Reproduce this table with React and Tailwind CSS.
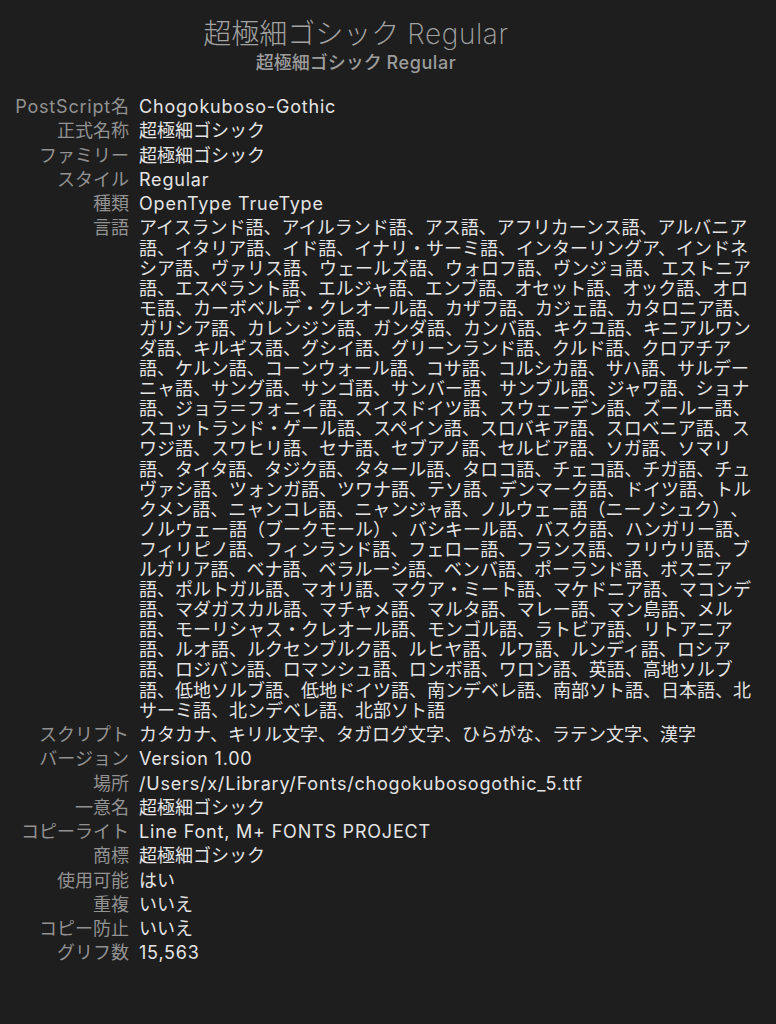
import React from "react";

// Language list, broken where Font Book breaks it
const languageLines = [
  "アイスランド語、アイルランド語、アス語、アフリカーンス語、アルバニア",
  "語、イタリア語、イド語、イナリ・サーミ語、インターリングア、インドネ",
  "シア語、ヴァリス語、ウェールズ語、ウォロフ語、ヴンジョ語、エストニア",
  "語、エスペラント語、エルジャ語、エンブ語、オセット語、オック語、オロ",
  "モ語、カーボベルデ・クレオール語、カザフ語、カジェ語、カタロニア語、",
  "ガリシア語、カレンジン語、ガンダ語、カンバ語、キクユ語、キニアルワン",
  "ダ語、キルギス語、グシイ語、グリーンランド語、クルド語、クロアチア",
  "語、ケルン語、コーンウォール語、コサ語、コルシカ語、サハ語、サルデー",
  "ニャ語、サング語、サンゴ語、サンバー語、サンブル語、ジャワ語、ショナ",
  "語、ジョラ＝フォニィ語、スイスドイツ語、スウェーデン語、ズールー語、",
  "スコットランド・ゲール語、スペイン語、スロバキア語、スロベニア語、ス",
  "ワジ語、スワヒリ語、セナ語、セブアノ語、セルビア語、ソガ語、ソマリ",
  "語、タイタ語、タジク語、タタール語、タロコ語、チェコ語、チガ語、チュ",
  "ヴァシ語、ツォンガ語、ツワナ語、テソ語、デンマーク語、ドイツ語、トル",
  "クメン語、ニャンコレ語、ニャンジャ語、ノルウェー語（ニーノシュク）、",
  "ノルウェー語（ブークモール）、バシキール語、バスク語、ハンガリー語、",
  "フィリピノ語、フィンランド語、フェロー語、フランス語、フリウリ語、ブ",
  "ルガリア語、ベナ語、ベラルーシ語、ベンバ語、ポーランド語、ボスニア",
  "語、ポルトガル語、マオリ語、マクア・ミート語、マケドニア語、マコンデ",
  "語、マダガスカル語、マチャメ語、マルタ語、マレー語、マン島語、メル",
  "語、モーリシャス・クレオール語、モンゴル語、ラトビア語、リトアニア",
  "語、ルオ語、ルクセンブルク語、ルヒヤ語、ルワ語、ルンディ語、ロシア",
  "語、ロジバン語、ロマンシュ語、ロンボ語、ワロン語、英語、高地ソルブ",
  "語、低地ソルブ語、低地ドイツ語、南ンデベレ語、南部ソト語、日本語、北",
  "サーミ語、北ンデベレ語、北部ソト語",
];

const Latin = ({ children }) => <span className="tracking-[0.8px]">{children}</span>;

const rows = [
  { label: <><Latin>PostScript</Latin>名</>, value: <Latin>Chogokuboso-Gothic</Latin> },
  { label: "正式名称", value: "超極細ゴシック" },
  { label: "ファミリー", value: "超極細ゴシック" },
  { label: "スタイル", value: <Latin>Regular</Latin> },
  { label: "種類", value: <Latin>OpenType TrueType</Latin> },
  {
    label: "言語",
    value: languageLines.map((line, i) => (
      <span key={i} className="block whitespace-nowrap">
        {line}
      </span>
    )),
  },
  { label: "スクリプト", value: "カタカナ、キリル文字、タガログ文字、ひらがな、ラテン文字、漢字" },
  { label: "バージョン", value: <Latin>Version 1.00</Latin> },
  { label: "場所", value: <Latin>/Users/x/Library/Fonts/chogokubosogothic_5.ttf</Latin> },
  { label: "一意名", value: "超極細ゴシック" },
  { label: "コピーライト", value: <Latin>Line Font, M+ FONTS PROJECT</Latin> },
  { label: "商標", value: "超極細ゴシック" },
  { label: "使用可能", value: "はい" },
  { label: "重複", value: "いいえ" },
  { label: "コピー防止", value: "いいえ" },
  { label: "グリフ数", value: <Latin>15,563</Latin> },
];

const App = () => {
  return (
    <div
      className="min-h-screen w-[776px] bg-[#1e1e1e] antialiased [text-spacing-trim:space-all]"
      style={{ fontFamily: '"Inter", "Noto Sans CJK JP", sans-serif' }}
    >
      {/* Header */}
      <div className="w-[712px] pt-[16px] text-center">
        <h1 className="text-[28px] leading-[36px] font-extralight text-[#a3a3a3]">
          超極細ゴシック <span className="tracking-[0.6px]">Regular</span>
        </h1>
        <p className="text-[18px] leading-[22px] font-medium text-[#9c9c9c]">
          超極細ゴシック <span className="tracking-[0.6px]">Regular</span>
        </p>
      </div>

      {/* Info list */}
      <div className="mt-[23px] grid w-[760px] grid-cols-[129px_1fr] gap-x-[10px] gap-y-[4.2px] text-[18px] leading-[20.1px]">
        {rows.map((row, i) => (
          <React.Fragment key={i}>
            <div className="text-right text-[#929292] whitespace-nowrap">{row.label}</div>
            <div className="text-[#e4e4e4]">{row.value}</div>
          </React.Fragment>
        ))}
      </div>
    </div>
  );
};

export default App;
